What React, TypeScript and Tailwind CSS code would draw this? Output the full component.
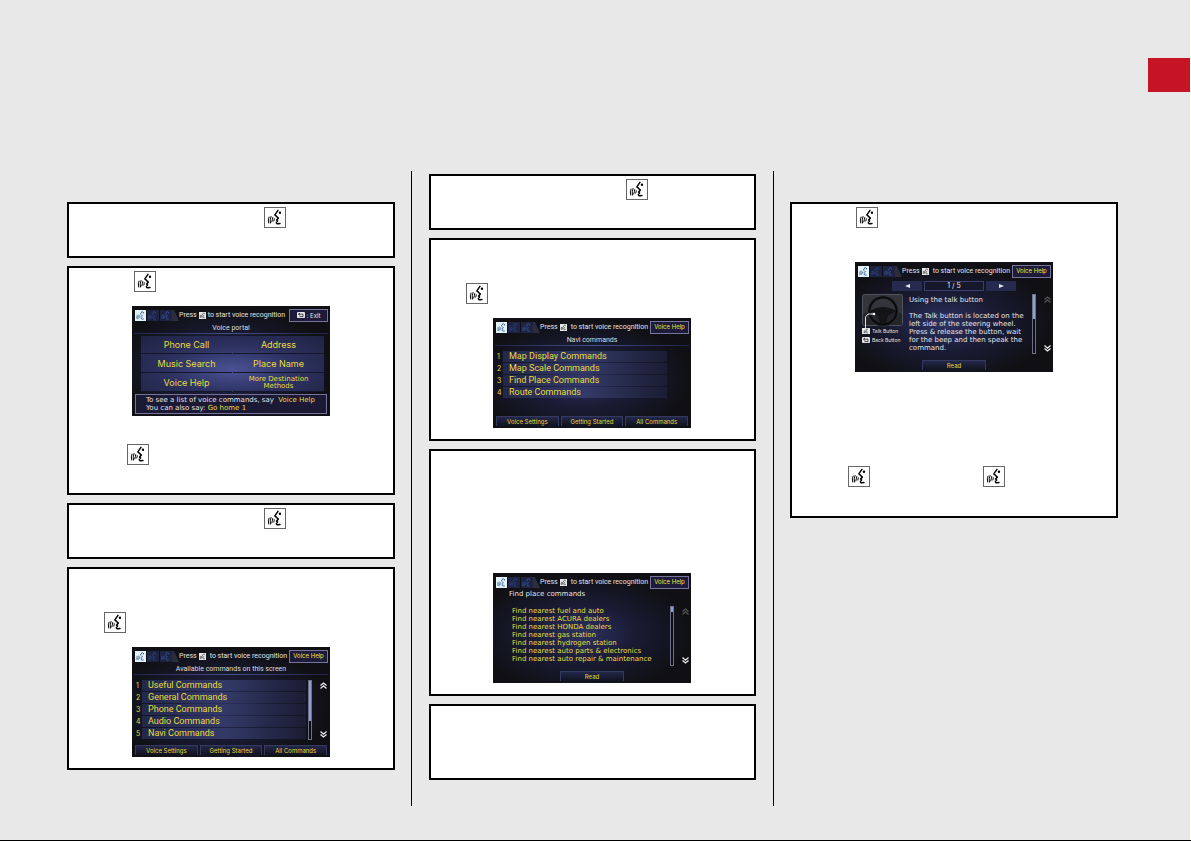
import type { ReactNode } from "react";

// face with sound waves, used on the key caps and inside the displays
function TalkGlyph({ className }: { className: string }) {
  return (
    <svg viewBox="0 0 21 21" className={className} fill="none" stroke="currentColor" strokeLinecap="round" strokeLinejoin="round">
      <path d="M13.8 2.6 L10.3 7.6 L12 9 L14.2 11.2 L12.2 13.2 L13.4 14.4 L12 15.8 Q12 17.5 13.8 17.4 L16 17.2" strokeWidth="1.6" />
      <path d="M3.9 10 Q2.4 13 3.5 16.6 M6.1 9.4 Q4.6 13 5.4 16.6 M8 10.6 Q7.6 13 7 15.4 M9.7 11.8 Q9.7 13 9.2 14.4" strokeWidth="1.1" />
      <circle cx="16" cy="5.2" r="1.3" fill="currentColor" stroke="none" />
    </svg>
  );
}

function TalkKey() {
  return (
    <span className="block h-[21px] w-[22px] shrink-0 border border-[#666] bg-white text-black">
      <TalkGlyph className="h-[19px] w-5" />
    </span>
  );
}

function Box({ className, children }: { className?: string; children?: ReactNode }) {
  return <section className={`border-2 border-black bg-white ${className ?? ""}`}>{children}</section>;
}

function TopBar({ exit }: { exit?: boolean }) {
  return (
    <div className="flex h-[17px] items-center pl-[3px] pr-[2px] pt-px">
      <div className="flex h-[11px] items-stretch">
        <span className="w-[11px] bg-[#e4f2fb] text-[#23507c]">
          <TalkGlyph className="size-[11px]" />
        </span>
        <span className="ml-px w-3 bg-[#1d2340] text-[#2c4888]">
          <TalkGlyph className="size-[11px]" />
        </span>
        <span className="ml-px w-3 bg-[#1d2340] text-[#3459a8]">
          <TalkGlyph className="size-[11px]" />
        </span>
        <svg viewBox="0 0 7 11" className="h-[11px] w-[7px]">
          <path d="M0 0 H2 L7 11 H0 Z" fill="#2b2d3c" />
        </svg>
      </div>
      <p className="flex flex-1 items-center whitespace-nowrap font-[Roboto,sans-serif] text-[7px] leading-[8px] text-[#e2e2e2]">
        <span>Press</span>
        <span className={exit ? "ml-[2px] mr-[2px] bg-[#e8e8e8] text-black" : "ml-[2px] mr-[4px] bg-[#e8e8e8] text-black"}>
          <TalkGlyph className="size-[7px]" />
        </span>
        <span>to start voice recognition</span>
      </p>
      {exit ? (
        <button className="flex h-[13px] w-[39px] shrink-0 items-center justify-center gap-[2px] border border-[#77749c] bg-[#1e1b3a] text-[6px] text-[#e8e8e8]">
          <BackIcon />
          <span>: Exit</span>
        </button>
      ) : (
        <button className="h-[13px] w-[39px] shrink-0 whitespace-nowrap border border-[#77749c] bg-[#1e1b3a] text-[6px] leading-[8px] text-[#f0e040]">
          Voice Help
        </button>
      )}
    </div>
  );
}

function BackIcon() {
  return (
    <svg viewBox="0 0 8 6" className="h-[6px] w-2 shrink-0">
      <rect width="8" height="6" rx="1" fill="#e4e4ea" />
      <path d="M3 1 L1.5 2.2 L3 3.4 M1.5 2.2 H6 V4.6 H2.5" fill="none" stroke="#222" strokeWidth=".8" />
    </svg>
  );
}

function Display({ exit, children }: { exit?: boolean; children: ReactNode }) {
  return (
    <div className="mx-auto flex h-[110px] w-[198px] flex-col overflow-hidden bg-[#101014] bg-[radial-gradient(ellipse_at_45%_55%,#2d3263_0%,#191b33_35%,#101014_70%)] font-[Inter,sans-serif]">
      <TopBar exit={exit} />
      {children}
    </div>
  );
}

function Title({ children }: { children: ReactNode }) {
  return (
    <div>
      <h2 className="h-[10px] text-center font-[Roboto,sans-serif] text-[7px] leading-[10px] text-[#dedede]">{children}</h2>
      <div className="mx-[2px] h-px bg-linear-to-r from-[#20244a] via-[#46508c] to-[#20244a]" />
    </div>
  );
}

function Scroller({ thumb, top }: { thumb: string; top?: boolean }) {
  return (
    <div className="flex h-[60px] gap-2">
      <div className="w-[4px] border border-[#6d7086] bg-[#0c0c16]">
        <div className={`bg-[#8fa0d0] ${thumb}`} />
      </div>
      <div className="flex flex-col justify-between py-[2px]">
        <button aria-label="Up" className={top ? "text-[#555]" : "text-[#ececec]"}>
          <svg viewBox="0 0 7 7" className="size-[7px]" fill="none" stroke="currentColor" strokeWidth="1.3">
            <path d="M.5 3.6 L3.5 1 L6.5 3.6 M.5 6.4 L3.5 3.8 L6.5 6.4" />
          </svg>
        </button>
        <button aria-label="Down" className="text-[#ececec]">
          <svg viewBox="0 0 7 7" className="size-[7px]" fill="none" stroke="currentColor" strokeWidth="1.3">
            <path d="M.5 .6 L3.5 3.2 L6.5 .6 M.5 3.4 L3.5 6 L6.5 3.4" />
          </svg>
        </button>
      </div>
    </div>
  );
}

const keyClass =
  "h-[10px] whitespace-nowrap border-x border-t border-[#34395f] bg-linear-to-b from-[#23274a] to-[#11131f] text-[6px] leading-[8px] text-[#e6d83c]";

function BottomKeys() {
  return (
    <div className="mt-auto grid grid-cols-3 gap-[2px] px-[3px] pb-[2px]">
      <button className={keyClass}>Voice Settings</button>
      <button className={keyClass}>Getting Started</button>
      <button className={keyClass}>All Commands</button>
    </div>
  );
}

function ReadKey() {
  return (
    <div className="mt-auto flex justify-center pb-[2px]">
      <button className={`w-16 ${keyClass}`}>Read</button>
    </div>
  );
}

function CommandList({ items }: { items: string[] }) {
  return (
    <ol className="flex w-[170px] flex-col gap-px">
      {items.map((item, i) => (
        <li key={item} className="flex h-[11px] items-center text-[#eadc3c]">
          <span className="w-[6px] text-[7px] leading-[11px]">{i + 1}</span>
          <button className="h-[11px] flex-1 bg-linear-to-r from-[#23284a] via-[#333a68] to-[#1a1d33] pl-[6px] text-left font-[Roboto,sans-serif] text-[9px] leading-[11px]">
            {item}
          </button>
        </li>
      ))}
    </ol>
  );
}

const portal = ["Phone Call", "Address", "Music Search", "Place Name", "Voice Help", "More Destination Methods"];

function VoicePortal() {
  return (
    <Display exit>
      <Title>Voice portal</Title>
      <div className="ml-[9px] mr-[6px] mt-[2px] mb-auto grid grid-cols-2 gap-px bg-[radial-gradient(ellipse_at_50%_60%,#4a5294_0%,#2c3160_50%,#1f2342_100%)]">
        {portal.map((name) => (
          <button
            key={name}
            className={
              name.length > 15
                ? "h-[18px] border-b border-[#14162a] px-2 font-['DejaVu_Sans',sans-serif] text-[7px] leading-[7px] text-[#eadc3c]"
                : "h-[18px] border-b border-[#14162a] text-[9px] leading-[11px] text-[#eadc3c]"
            }
          >
            {name}
          </button>
        ))}
      </div>
      <div className="mx-[3px] mb-[2px] h-5 whitespace-nowrap border border-[#77749c] bg-[#1b1934] pl-[10px] pt-px font-['DejaVu_Sans',sans-serif] text-[7px] leading-[8px] text-[#e4e4e4]">
        <p>
          To see a list of voice commands, say <span className="ml-[2px] text-[#eadc3c]">Voice Help</span>
        </p>
        <p>
          You can also say: <span className="text-[#eadc3c]">Go home 1</span>
        </p>
      </div>
    </Display>
  );
}

function AvailableCommands() {
  return (
    <Display>
      <Title>Available commands on this screen</Title>
      <div className="mt-[5px] flex justify-between pl-[4px] pr-[3px]">
        <CommandList
          items={["Useful Commands", "General Commands", "Phone Commands", "Audio Commands", "Navi Commands"]}
        />
        <Scroller thumb="h-10" />
      </div>
      <BottomKeys />
    </Display>
  );
}

function NaviCommands() {
  return (
    <Display>
      <Title>Navi commands</Title>
      <div className="mt-[5px] pl-[4px]">
        <CommandList items={["Map Display Commands", "Map Scale Commands", "Find Place Commands", "Route Commands"]} />
      </div>
      <BottomKeys />
    </Display>
  );
}

const places = [
  "Find nearest fuel and auto",
  "Find nearest ACURA dealers",
  "Find nearest HONDA dealers",
  "Find nearest gas station",
  "Find nearest hydrogen station",
  "Find nearest auto parts & electronics",
  "Find nearest auto repair & maintenance",
];

function FindPlace() {
  return (
    <Display>
      <h2 className="pl-4 font-['DejaVu_Sans',sans-serif] text-[7px] leading-[8px] text-[#e4e4e4]">
        Find place commands
      </h2>
      <div className="mt-[8px] flex justify-between pl-[19px] pr-[2px]">
        <ul className="whitespace-nowrap pt-px font-['DejaVu_Sans',sans-serif] text-[7px] leading-[8px] text-[#eadc3c]">
          {places.map((p) => (
            <li key={p}>{p}</li>
          ))}
        </ul>
        <Scroller thumb="h-[5px]" top />
      </div>
      <ReadKey />
    </Display>
  );
}

function Wheel() {
  return (
    <svg viewBox="0 0 41 40" className="h-10 w-[41px]">
      <rect x=".5" y=".5" width="40" height="31" rx="2" fill="#34353a" stroke="#50525c" />
      <path d="M1 20 Q20 8 40 20 V31 H1 Z" fill="#24252a" />
      <circle cx="21" cy="17" r="14" fill="none" stroke="#0b0b0d" strokeWidth="3" />
      <circle cx="21" cy="17" r="15.3" fill="none" stroke="#55575e" strokeWidth=".5" />
      <path d="M8 17 Q21 9 34 17 L26 22 L24 29 H18 L16 22 Z" fill="#141417" />
      <path d="M12 20 H6 L3.5 23 V36" fill="none" stroke="#ddd" strokeWidth="1" />
      <circle cx="12" cy="20" r="1.3" fill="#fff" />
    </svg>
  );
}

function TalkHelp() {
  return (
    <Display>
      <div className="mt-[2px] flex justify-center gap-[2px] text-[#e8e8e8]">
        <button aria-label="Previous" className="flex h-[10px] w-[30px] items-center justify-center bg-[#252a4e]">
          <svg viewBox="0 0 5 4" className="h-1 w-[5px]" fill="currentColor"><path d="M5 0 V4 L0 2 Z" /></svg>
        </button>
        <span className="h-[10px] w-[60px] border border-[#3a406e] bg-[#15172a] text-center text-[7px] leading-[8px]">1 / 5</span>
        <button aria-label="Next" className="flex h-[10px] w-[30px] items-center justify-center bg-[#252a4e]">
          <svg viewBox="0 0 5 4" className="h-1 w-[5px]" fill="currentColor"><path d="M0 0 V4 L5 2 Z" /></svg>
        </button>
      </div>
      <div className="mt-[3px] flex pl-[7px] pr-[2px]">
        <div className="h-[53px] w-[47px] shrink-0 whitespace-nowrap text-[5px] leading-[8px] text-[#e4e4e4]">
          <div className="h-[33px]">
            <Wheel />
          </div>
          <p className="flex items-center gap-[2px]">
            <span className="w-2 bg-[#e8e8e8] text-black">
              <TalkGlyph className="h-[6px] w-2" />
            </span>
            Talk Button
          </p>
          <p className="mt-px flex items-center gap-[2px]">
            <BackIcon />
            Back Button
          </p>
        </div>
        <div className="flex-1 whitespace-nowrap pt-[2px] font-['DejaVu_Sans',sans-serif] text-[7px] leading-[8px] text-[#e4e4e4]">
          <h2>Using the talk button</h2>
          <p className="mt-2">
            The Talk button is located on the
            <br />
            left side of the steering wheel.
            <br />
            Press &amp; release the button, wait
            <br />
            for the beep and then speak the
            <br />
            command.
          </p>
        </div>
        <Scroller thumb="h-6" top />
      </div>
      <ReadKey />
    </Display>
  );
}

export default function App() {
  return (
    <div className="flex min-h-screen flex-col bg-[#e8e8e8]">
      <div className="flex flex-1 flex-col border-r border-[#fffff0]">
        <header className="flex h-[171px] justify-end pt-[58px]">
          <div className="h-[34px] w-[42px] bg-[#c41425]" />
        </header>

        <main className="mb-[34px] ml-[50px] mr-[54px] grid flex-1 grid-cols-3">
          <div className="flex flex-col gap-2 border-r border-black pl-[17px] pr-4 pt-[31px]">
            <Box className="pb-7 pl-[195px] pt-[3px]">
              <TalkKey />
            </Box>
            <Box className="pb-7 pt-[3px]">
              <div className="pl-[65px]">
                <TalkKey />
              </div>
              <div className="mb-7 mt-[14px]">
                <VoicePortal />
              </div>
              <div className="pl-[58px]">
                <TalkKey />
              </div>
            </Box>
            <Box className="pb-7 pl-[195px] pt-[3px]">
              <TalkKey />
            </Box>
            <Box className="pb-[11px] pt-[43px]">
              <div className="mb-[14px] pl-[35px]">
                <TalkKey />
              </div>
              <AvailableCommands />
            </Box>
          </div>

          <div className="flex flex-col gap-2 border-r border-black pl-[17px] pr-[17px] pt-[3px]">
            <Box className="pb-7 pl-[195px] pt-[3px]">
              <TalkKey />
            </Box>
            <Box className="pb-[11px] pr-px pt-[43px]">
              <div className="mb-[14px] pl-[35px]">
                <TalkKey />
              </div>
              <NaviCommands />
            </Box>
            <Box className="pb-[11px] pr-px pt-[122px]">
              <FindPlace />
            </Box>
            <Box className="h-[76px]" />
          </div>

          <div className="pl-4 pr-[18px] pt-[31px]">
            <Box className="pb-[29px] pt-[3px]">
              <div className="mb-[34px] pl-[64px]">
                <TalkKey />
              </div>
              <TalkHelp />
              <div className="mt-[94px] flex gap-[113px] pl-14">
                <TalkKey />
                <TalkKey />
              </div>
            </Box>
          </div>
        </main>
      </div>
      <div className="h-px bg-black" />
    </div>
  );
}
